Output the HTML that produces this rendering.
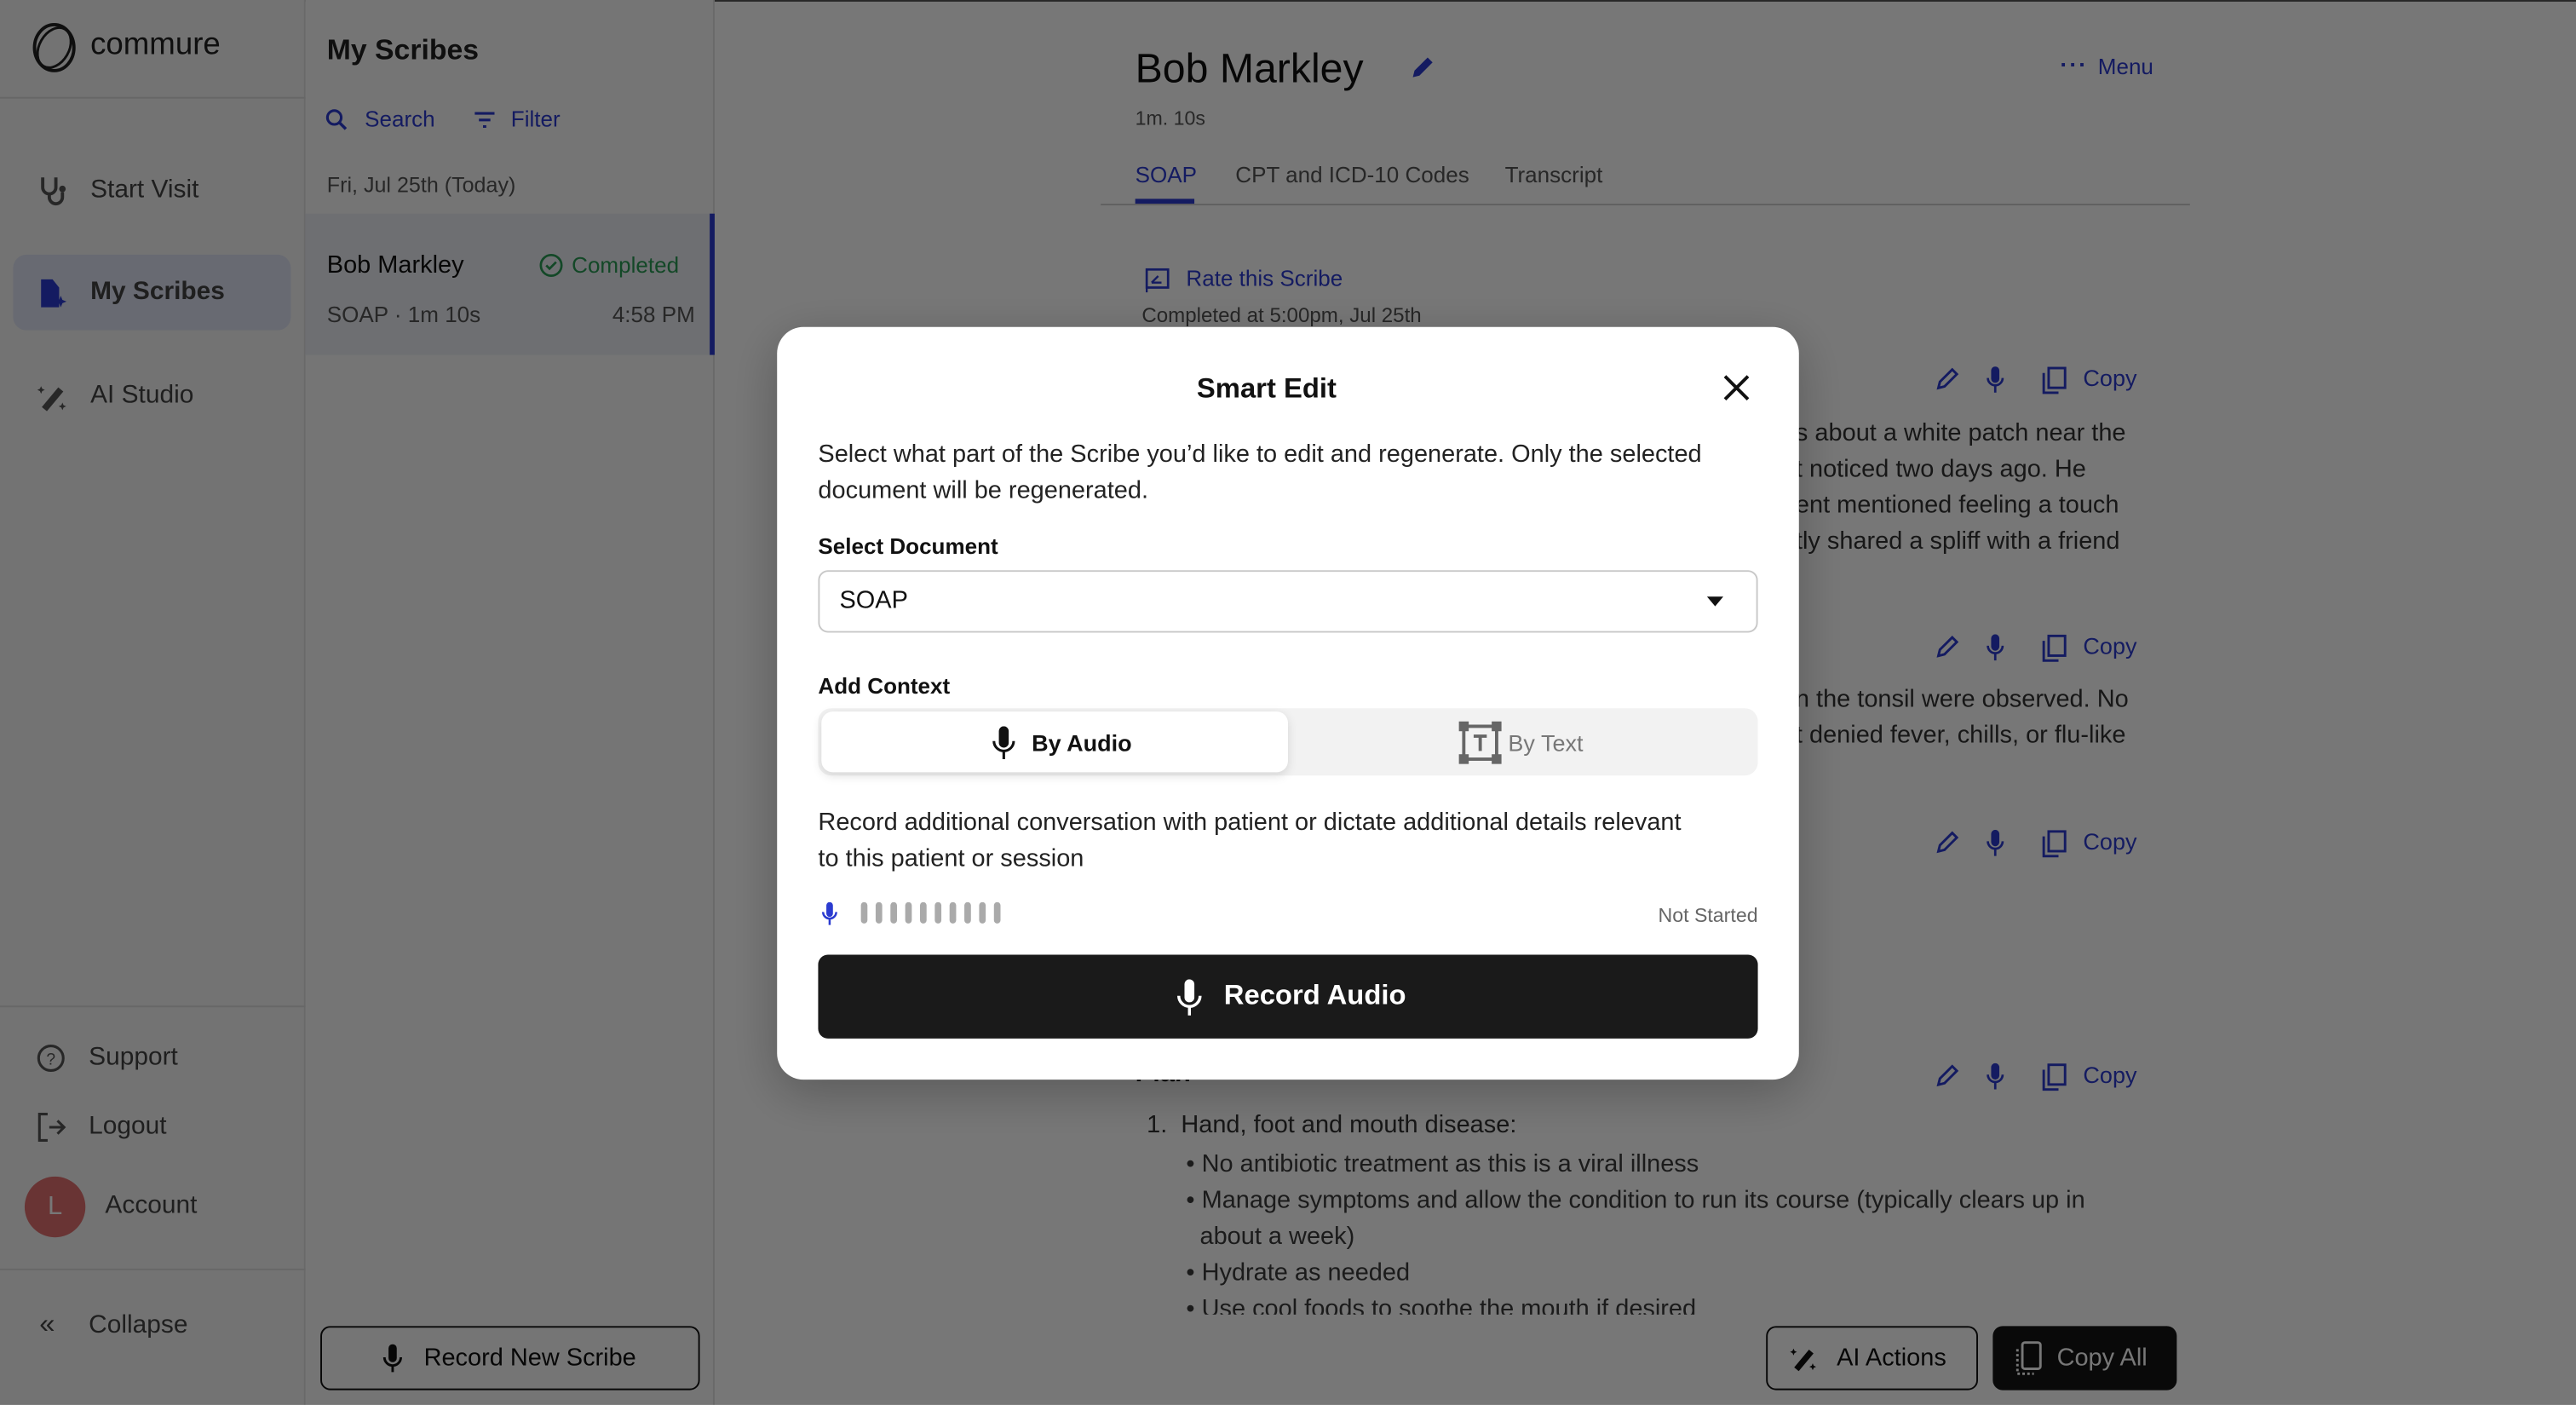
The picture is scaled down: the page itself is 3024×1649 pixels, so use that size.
<!DOCTYPE html>
<html><head><meta charset="utf-8"><style>
*{box-sizing:border-box;margin:0;padding:0}
html,body{width:3024px;height:1648px;overflow:hidden;background:#fff}
#w{position:absolute;left:0;top:0;width:1568px;height:855px;transform:scale(1.928571);transform-origin:0 0;font-family:"Liberation Sans",sans-serif;color:#111}
.a{position:absolute;white-space:nowrap}
.blue{color:#2b3bd0}
.side{position:absolute;left:0;top:0;width:186px;height:855px;background:#f7f7f7;border-right:1px solid #e0e0e0}
.list{position:absolute;left:186px;top:0;width:249px;height:855px;background:#fafafa;border-right:1px solid #e0e0e0}
.hr{position:absolute;height:1px;background:#ddd}
.nav{font-size:15.5px;color:#444}
.ov{position:absolute;left:0;top:0;width:1568px;height:855px;background:rgba(0,0,0,.535)}
.txt{font-size:15px;color:#333}
svg{position:absolute}
</style></head><body><div id="w">
<div style="position:absolute;left:0;top:0;width:1568px;height:1px;background:#555"></div>
<div class="side">
  <svg style="left:18px;top:14px" width="30" height="30" viewBox="0 0 30 30"><ellipse cx="15" cy="15" rx="12" ry="14" fill="none" stroke="#222" stroke-width="2"/><ellipse cx="15" cy="15" rx="9" ry="13" fill="none" stroke="#222" stroke-width="1.5" transform="rotate(30 15 15)"/></svg>
  <div class="a" style="left:55px;top:17px;font-size:19px;color:#222">commure</div>
  <div class="hr" style="left:0;top:59px;width:186px"></div>
  <svg style="left:22px;top:106px" width="20" height="20" viewBox="0 0 20 20"><path d="M4 2v6a4 4 0 0 0 8 0V2M8 12v2a4 4 0 0 0 8 0v-3" fill="none" stroke="#555" stroke-width="2"/><circle cx="16" cy="9" r="2" fill="#555"/></svg>
  <div class="a nav" style="left:55px;top:107px">Start Visit</div>
  <div style="position:absolute;left:8px;top:155px;width:169px;height:46px;background:#dfe4f5;border-radius:8px"></div>
  <svg style="left:22px;top:169px" width="20" height="20" viewBox="0 0 20 20"><path d="M3 1h7l4 5v12H3z" fill="#2b3bd0"/><path d="M15 11l1 2.5 2.5 1-2.5 1-1 2.5-1-2.5-2.5-1 2.5-1z" fill="#2b3bd0"/></svg>
  <div class="a nav blue" style="left:55px;top:169px;font-weight:bold">My Scribes</div>
  <svg style="left:22px;top:232px" width="20" height="20" viewBox="0 0 20 20"><path d="M5 17l10-12" stroke="#555" stroke-width="4"/><path d="M3 3l.7 1.6 1.6.7-1.6.7L3 7.6l-.7-1.6L.7 5.3l1.6-.7zM16 13l.7 1.6 1.6.7-1.6.7-.7 1.6-.7-1.6-1.6-.7 1.6-.7z" fill="#555"/></svg>
  <div class="a nav" style="left:55px;top:232px">AI Studio</div>
  <div class="hr" style="left:0;top:612px;width:186px"></div>
  <svg style="left:22px;top:635px" width="18" height="20" viewBox="0 0 18 20"><circle cx="9" cy="9" r="7.5" fill="none" stroke="#555" stroke-width="1.6"/><text x="9" y="13" font-size="10" text-anchor="middle" fill="#555" font-family="Liberation Sans">?</text></svg>
  <div class="a nav" style="left:54px;top:635px">Support</div>
  <svg style="left:22px;top:676px" width="20" height="20" viewBox="0 0 20 20"><path d="M7 2H2v16h5M8 10h9M13 6l4 4-4 4" fill="none" stroke="#555" stroke-width="1.6"/></svg>
  <div class="a nav" style="left:54px;top:677px">Logout</div>
  <div style="position:absolute;left:15px;top:716px;width:37px;height:37px;border-radius:50%;background:#e07070;color:#fff;font-size:16px;text-align:center;line-height:37px">L</div>
  <div class="a nav" style="left:64px;top:725px">Account</div>
  <div class="hr" style="left:0;top:772px;width:186px"></div>
  <div class="a nav" style="left:24px;top:796px;font-size:17px">«</div>
  <div class="a nav" style="left:54px;top:798px">Collapse</div>
</div>
<div class="list">
  <div class="a" style="left:13px;top:20px;font-size:17.5px;font-weight:bold;color:#222">My Scribes</div>
  <svg style="left:12px;top:66px" width="14" height="14" viewBox="0 0 14 14"><circle cx="5.5" cy="5.5" r="4.2" fill="none" stroke="#2b3bd0" stroke-width="1.6"/><path d="M8.5 8.5l4 4" stroke="#2b3bd0" stroke-width="1.8"/></svg>
  <div class="a blue" style="left:36px;top:65px;font-size:13.5px">Search</div>
  <svg style="left:102px;top:67px" width="14" height="12" viewBox="0 0 14 12"><path d="M1 2h12M3.5 6h7M6 10h2" stroke="#2b3bd0" stroke-width="1.6"/></svg>
  <div class="a blue" style="left:125px;top:65px;font-size:13.5px">Filter</div>
  <div class="a" style="left:13px;top:105px;font-size:13px;color:#555">Fri, Jul 25th (Today)</div>
  <div style="position:absolute;left:0;top:130px;width:249px;height:86px;background:#eceef4;border-right:3px solid #2b3bd0"></div>
  <div class="a" style="left:13px;top:153px;font-size:15px;color:#111">Bob Markley</div>
  <svg style="left:142px;top:154px" width="15" height="15" viewBox="0 0 15 15"><circle cx="7.5" cy="7.5" r="6.3" fill="none" stroke="#2a9a55" stroke-width="1.4"/><path d="M4.5 7.5l2 2 4-4" fill="none" stroke="#2a9a55" stroke-width="1.4"/></svg>
  <div class="a" style="left:162px;top:154px;font-size:13.5px;color:#2a9a55">Completed</div>
  <div class="a" style="left:13px;top:184px;font-size:13.5px;color:#555">SOAP · 1m 10s</div>
  <div class="a" style="right:11px;top:184px;font-size:13.5px;color:#555">4:58 PM</div>
  <div style="position:absolute;left:9px;top:807px;width:231px;height:39px;border:1.5px solid #111;border-radius:6px"></div>
  <svg style="left:47px;top:818px" width="12" height="18" viewBox="0 0 12 18"><rect x="3.5" y="0" width="5" height="11" rx="2.5" fill="#111"/><path d="M1 8a5 5 0 0 0 10 0M6 13v4" fill="none" stroke="#111" stroke-width="1.5"/></svg>
  <div class="a" style="left:72px;top:818px;font-size:15px;color:#111">Record New Scribe</div>
</div>
<div class="a" style="left:691px;top:28px;font-size:25px;color:#111">Bob Markley</div>
<svg style="left:858px;top:33px" width="16" height="16" viewBox="0 0 16 16"><path d="M2 14l1-4 8-8 3 3-8 8z" fill="#2b3bd0"/></svg>
<div class="a blue" style="left:1254px;top:31px;font-size:14px;font-weight:bold;letter-spacing:1px">···</div>
<div class="a blue" style="left:1277px;top:33px;font-size:13.5px">Menu</div>
<div class="a" style="left:691px;top:65px;font-size:12px;color:#555">1m. 10s</div>
<div class="a blue" style="left:691px;top:99px;font-size:13.5px">SOAP</div>
<div style="position:absolute;left:691px;top:121px;width:36px;height:3px;background:#2b3bd0"></div>
<div class="a" style="left:752px;top:99px;font-size:13.5px;color:#555">CPT and ICD-10 Codes</div>
<div class="a" style="left:916px;top:99px;font-size:13.5px;color:#555">Transcript</div>
<div class="hr" style="left:670px;top:124px;width:663px;background:#ccc"></div>
<svg style="left:697px;top:163px" width="15" height="15" viewBox="0 0 15 15"><rect x="1" y="1" width="13" height="11" fill="none" stroke="#2b3bd0" stroke-width="1.4"/><path d="M1 12v3M4 9l4-4M4 9h6" stroke="#2b3bd0" stroke-width="1.2"/></svg>
<div class="a blue" style="left:722px;top:162px;font-size:13.5px">Rate this Scribe</div>
<div class="a" style="left:695px;top:185px;font-size:12.5px;color:#555">Completed at 5:00pm, Jul 25th</div>
<div id="icons"></div>
<div class="a txt" style="left:1093px;top:253px;line-height:22px">s about a white patch near the<br>t noticed two days ago. He<br>ent mentioned feeling a touch<br>tly shared a spliff with a friend</div>
<div class="a txt" style="left:1093px;top:415px;line-height:22px">n the tonsil were observed. No<br>t denied fever, chills, or flu-like</div>
<div class="a" style="left:691px;top:645px;font-size:16px;font-weight:bold;color:#111">Plan</div>
<div style="position:absolute;left:690px;top:670px;width:640px;height:130px;overflow:hidden">
<div class="a txt" style="left:8px;top:6px">1.&nbsp; Hand, foot and mouth disease:</div>
<div class="a txt" style="left:32px;top:28px;line-height:22px;color:#3a3a3a">•&nbsp;No antibiotic treatment as this is a viral illness<br>•&nbsp;Manage symptoms and allow the condition to run its course (typically clears up in<br>&nbsp;&nbsp;about a week)<br>•&nbsp;Hydrate as needed<br>•&nbsp;Use cool foods to soothe the mouth if desired</div>
</div>
<div style="position:absolute;left:1075px;top:807px;width:129px;height:39px;border:1.5px solid #111;border-radius:6px"></div>
<svg style="left:1089px;top:818px" width="18" height="18" viewBox="0 0 20 20"><path d="M5 17l10-12" stroke="#111" stroke-width="4"/><path d="M3 3l.7 1.6 1.6.7-1.6.7L3 7.6l-.7-1.6L.7 5.3l1.6-.7zM16 13l.7 1.6 1.6.7-1.6.7-.7 1.6-.7-1.6-1.6-.7 1.6-.7z" fill="#111"/></svg>
<div class="a" style="left:1118px;top:818px;font-size:15px;color:#111">AI Actions</div>
<div style="position:absolute;left:1213px;top:807px;width:112px;height:39px;background:#151515;border-radius:6px"></div>
<svg style="left:1226px;top:816px" width="18" height="22" viewBox="0 0 18 22"><rect x="5" y="1" width="11" height="16" rx="1.5" fill="none" stroke="#fff" stroke-width="1.5"/><path d="M2 5v15h10" fill="none" stroke="#fff" stroke-width="1.5" stroke-dasharray="1.5 1.5"/></svg>
<div class="a" style="left:1252px;top:818px;font-size:15px;color:#fff">Copy All</div>
<div class="ov"></div>
<div style="position:absolute;left:473px;top:199px;width:622px;height:458px;background:#fff;border-radius:16px;box-shadow:0 8px 30px rgba(0,0,0,.25)">
  <div class="a" style="left:0;width:596px;text-align:center;top:28px;font-size:17px;font-weight:bold;color:#111">Smart Edit</div>
  <svg style="left:576px;top:29px" width="16" height="16" viewBox="0 0 16 16"><path d="M1 1l14 14M15 1L1 15" stroke="#111" stroke-width="2"/></svg>
  <div class="a" style="left:25px;top:67px;font-size:15px;line-height:22px;color:#222">Select what part of the Scribe you’d like to edit and regenerate. Only the selected<br>document will be regenerated.</div>
  <div class="a" style="left:25px;top:126px;font-size:13.5px;font-weight:bold;color:#111">Select Document</div>
  <div style="position:absolute;left:25px;top:148px;width:572px;height:38px;border:1px solid #c8c8c8;border-radius:6px"></div>
  <div class="a" style="left:38px;top:158px;font-size:15px;color:#111">SOAP</div>
  <svg style="left:566px;top:164px" width="10" height="6" viewBox="0 0 10 6"><path d="M0 0h10L5 6z" fill="#111"/></svg>
  <div class="a" style="left:25px;top:211px;font-size:13.5px;font-weight:bold;color:#111">Add Context</div>
  <div style="position:absolute;left:25px;top:232px;width:572px;height:41px;background:#f2f2f2;border-radius:8px"></div>
  <div style="position:absolute;left:27px;top:234px;width:284px;height:37px;background:#fff;border-radius:7px;box-shadow:0 2px 6px rgba(0,0,0,.12)"></div>
  <svg style="left:131px;top:243px" width="14" height="20" viewBox="0 0 14 20"><rect x="4" y="0" width="6" height="13" rx="3" fill="#111"/><path d="M1 9a6 6 0 0 0 12 0M7 15v5" fill="none" stroke="#111" stroke-width="1.6"/></svg>
  <div class="a" style="left:155px;top:245px;font-size:14px;font-weight:bold;color:#111">By Audio</div>
  <svg style="left:415px;top:240px" width="26" height="26" viewBox="0 0 26 26"><rect x="3" y="3" width="20" height="20" fill="none" stroke="#666" stroke-width="2"/><rect x="0" y="0" width="6" height="6" fill="#666"/><rect x="20" y="0" width="6" height="6" fill="#666"/><rect x="0" y="20" width="6" height="6" fill="#666"/><rect x="20" y="20" width="6" height="6" fill="#666"/><path d="M9 9h8M13 9v9" stroke="#666" stroke-width="2"/></svg>
  <div class="a" style="left:445px;top:245px;font-size:14px;color:#777">By Text</div>
  <div class="a" style="left:25px;top:291px;font-size:15px;line-height:22px;color:#222">Record additional conversation with patient or dictate additional details relevant<br>to this patient or session</div>
  <svg style="left:27px;top:350px" width="10" height="14" viewBox="0 0 10 14"><rect x="3" y="0" width="4" height="9" rx="2" fill="#2b3bd0"/><path d="M1 6a4 4 0 0 0 8 0M5 10v4" fill="none" stroke="#2b3bd0" stroke-width="1.3"/></svg>
  <svg style="left:51px;top:350px" width="90" height="14" viewBox="0 0 90 14"><g fill="#aaa"><rect x="0" y="0" width="4" height="13" rx="2"/><rect x="9" y="0" width="4" height="13" rx="2"/><rect x="18" y="0" width="4" height="13" rx="2"/><rect x="27" y="0" width="4" height="13" rx="2"/><rect x="36" y="0" width="4" height="13" rx="2"/><rect x="45" y="0" width="4" height="13" rx="2"/><rect x="54" y="0" width="4" height="13" rx="2"/><rect x="63" y="0" width="4" height="13" rx="2"/><rect x="72" y="0" width="4" height="13" rx="2"/><rect x="81" y="0" width="4" height="13" rx="2"/></g></svg>
  <div class="a" style="right:25px;top:351px;font-size:12px;color:#666">Not Started</div>
  <div style="position:absolute;left:25px;top:382px;width:572px;height:51px;background:#1a1a1a;border-radius:6px"></div>
  <svg style="left:243px;top:397px" width="16" height="22" viewBox="0 0 16 22"><rect x="5" y="0" width="6" height="14" rx="3" fill="#fff"/><path d="M1.5 10a6.5 6.5 0 0 0 13 0M8 17v5" fill="none" stroke="#fff" stroke-width="1.8"/></svg>
  <div class="a" style="left:272px;top:397px;font-size:17px;font-weight:bold;color:#fff">Record Audio</div>
</div>
</div>
<script>
var h='',ys=[231,394,513,655];
ys.forEach(function(y){
h+='<svg style="left:1178px;top:'+(y-8)+'px" width="15" height="15" viewBox="0 0 16 16"><path d="M2 14l1-4 8-8 3 3-8 8z" fill="none" stroke="#2b3bd0" stroke-width="1.6"/></svg>'+
'<svg style="left:1209px;top:'+(y-8)+'px" width="11" height="16" viewBox="0 0 11 16"><rect x="3" y="0" width="5" height="10" rx="2.5" fill="#2b3bd0"/><path d="M1 7a4.5 4.5 0 0 0 9 0M5.5 12v4" fill="none" stroke="#2b3bd0" stroke-width="1.4"/></svg>'+
'<svg style="left:1243px;top:'+(y-8)+'px" width="15" height="17" viewBox="0 0 15 17"><rect x="4" y="1" width="10" height="12" fill="none" stroke="#2b3bd0" stroke-width="1.5"/><path d="M1 4v12h9" fill="none" stroke="#2b3bd0" stroke-width="1.5"/></svg>'+
'<div class="a blue" style="left:1268px;top:'+(y-9)+'px;font-size:14px">Copy</div>';});
document.getElementById('icons').outerHTML=h;
</script>
</body></html>
